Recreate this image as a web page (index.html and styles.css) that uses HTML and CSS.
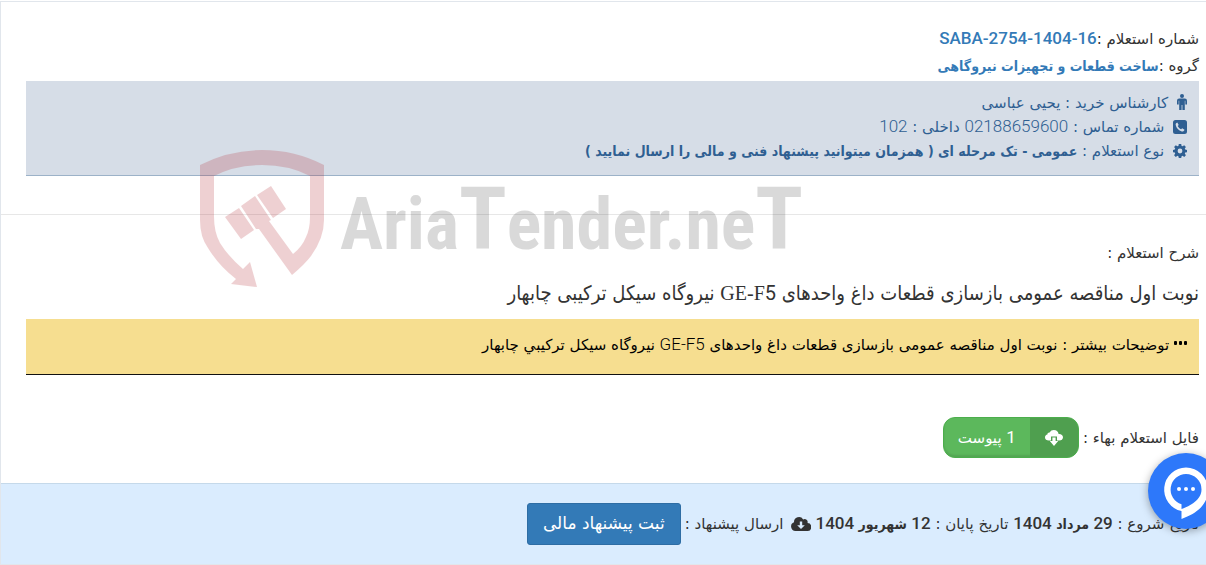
FILE: index.html
```html
<!DOCTYPE html>
<html lang="fa" dir="rtl">
<head>
    <meta charset="UTF-8">
    <meta name="viewport" content="width=device-width, initial-scale=1.0">
    <title>شرح استعلام</title>
    <link rel="stylesheet" href="styles.css">
</head>
<body>
    <main class="inquiry">
        <section class="inquiry-head">
            <div class="head-row">شماره استعلام :<a href="#" class="head-link num">SABA-2754-1404-16</a></div>
            <div class="head-row">گروه :<a href="#" class="head-link">ساخت قطعات و تجهیزات نیروگاهی</a></div>
            <div class="contact-box">
                <div class="contact-row">
                    <svg class="icon icon-male" viewBox="0 0 10 16"><circle cx="5" cy="2" r="2"/><path d="M2.2 4.6h5.6Q10 4.6 10 6.8V10.500h-1.700V6.800h-.5V16H5.400v-5h-.8v5H2.200V6.800h-.5v3.700H0V6.800Q0 4.600 2.200 4.600z"/></svg>
                    کارشناس خرید : یحیی عباسی
                </div>
                <div class="contact-row">
                    <svg class="icon" viewBox="0 0 14 14"><path fill-rule="evenodd" d="M2.500 0h9A2.500 2.500 0 0 1 14 2.500v9a2.500 2.500 0 0 1-2.500 2.500h-9A2.500 2.500 0 0 1 0 11.500v-9A2.500 2.500 0 0 1 2.500 0zM4.300 2.500C3 3 2.500 3.900 2.700 5.100c.6 3 3 5.600 6.100 6.300 1.300.2 2.300-.4 2.700-1.700l-2.300-1.400-1.100 1C6.600 8.700 5.500 7.500 4.700 6l1-1.100z"/></svg>
                    شماره تماس : <span class="num">02188659600</span> داخلی : <span class="num">102</span>
                </div>
                <div class="contact-row">
                    <svg class="icon" viewBox="0 0 14 14"><path fill-rule="evenodd" d="M5.800 0h2.400l.4 1.900 1 .4 1.600-1.100 1.700 1.700-1.100 1.600.4 1 1.800.4v2.300l-1.800.4-.4 1 1.100 1.600-1.700 1.700-1.600-1.100-1 .4L8.200 14H5.800l-.4-1.800-1-.4-1.600 1.100-1.700-1.700 1.100-1.600-.4-1L0 8.200V5.900l1.800-.4.4-1-1.100-1.600 1.700-1.700 1.600 1.100 1-.4zM7 4.600a2.400 2.400 0 1 0 0 4.800 2.400 2.400 0 0 0 0-4.800z"/></svg>
                    نوع استعلام : <b>عمومی - تک مرحله ای ( همزمان میتوانید پیشنهاد فنی و مالی را ارسال نمایید )</b>
                </div>
            </div>
        </section>

        <section class="inquiry-body">
            <div class="body-label">شرح استعلام :</div>
            <h1 class="body-title">نوبت اول مناقصه عمومی بازسازی قطعات داغ واحدهای <span class="serif">GE-F</span><span class="num">5</span> نیروگاه سیکل ترکیبی چابهار</h1>
            <div class="note-box">
                <svg class="icon-dots" viewBox="0 0 13 4"><rect width="3" height="4" rx="1"/><rect x="5" width="3" height="4" rx="1"/><rect x="10" width="3" height="4" rx="1"/></svg>
                توضیحات بیشتر : نوبت اول مناقصه عمومی بازسازی قطعات داغ واحدهای <span class="num">GE-F5</span> نیروگاه سیکل ترکیبي چابهار
            </div>
            <div class="file-row">
                <span>فایل استعلام بهاء :</span>
                <button type="button" class="file-button">
                    <span class="file-icon">
                        <svg class="icon-cloud" viewBox="0 0 18 16"><path d="M4 10.500C1.500 10.500 0 9.200 0 7.400 0 5.800 1 4.800 2.400 4.500 2.300 3.200 3.300 2.400 4.600 2.500 5.600.8 7 0 8.800 0c2.600 0 4.400 1.600 4.800 4 2.500-.2 4.400 1.100 4.400 3.200 0 2-1.500 3.300-3.800 3.300h-2.200v-4H6v4z"/><path d="M7.400 7.500h3.200v3.500h2.600L9 16l-4.200-5h2.600z"/></svg>
                    </span>
                    <span class="file-text"><span class="num">1</span> پیوست</span>
                </button>
            </div>
        </section>

        <footer class="inquiry-footer">
            <span>تاریخ شروع : <b><span class="num">29</span> مرداد <span class="num">1404</span></b> تاریخ پایان : <b><span class="num">12</span> شهریور <span class="num">1404</span></b></span>
            <svg class="icon-cloud-dark" viewBox="0 0 20 14"><path fill-rule="evenodd" d="M4.500 14A4.500 4.500 0 0 1 3 5.300 5 5 0 0 1 12.200 2.400 3 3 0 0 1 16.500 6 4 4 0 0 1 16 14zM8.800 4.500v3.700H6.200L10 12l3.800-3.800h-2.600V4.500z"/></svg>
            <span>ارسال پیشنهاد :</span>
            <button type="button" class="submit-button">ثبت پیشنهاد مالی</button>
        </footer>

        <div class="watermark" dir="ltr">
            <svg class="watermark-shield" viewBox="0 0 124 137">
                <path d="M62 0Q95 0 124 15V70Q124 88 111 106 105 114 92 125L59 79 56 79 41 56 55 46 71 70 69 71 93 104Q102 97 106 87 110 79 110 67V26Q89 15 62 15T14 26V67Q14 82 20 93 28 106 43 119L50 112 57 137 31 134 36 129Q19 116 8 98 0 87 0 70V15Q29 0 62 0z"/>
                <path d="M25 67L39 58 54 80 41 89zM57 45L71 36 86 59 73 68z"/>
            </svg>
            <span class="watermark-text">Aria<span class="watermark-cap">T</span>ender.ne<span class="watermark-cap">T</span></span>
        </div>
    </main>

    <button type="button" class="chat-button" aria-label="گفتگو">
        <svg class="chat-icon" viewBox="0 0 76 76"><path fill-rule="evenodd" d="M38 14.500a22 22 0 0 1 22 22C60 51 50 60 33.500 66V58A22 22 0 0 1 38 14.500zm0 6.500a15.500 15.500 0 0 0-4.500 30.300V56C42 53 53.500 47 53.500 36.500a15.500 15.500 0 0 0-15.500-15.500z"/><circle cx="31" cy="36" r="2"/><circle cx="38" cy="36" r="2"/><circle cx="45" cy="36" r="2"/></svg>
    </button>
</body>
</html>
```
FILE: styles.css
```css
* {
    box-sizing: border-box;
}
body {
    margin: 0;
    font-family: "DejaVu Sans", sans-serif;
    font-size: 15px;
    color: #333;
    background: #fff;
}
a {
    color: #337ab7;
    text-decoration: none;
}
button {
    font-family: inherit;
    cursor: pointer;
}
b {
    font-family: "DejaVu Sans Condensed", "DejaVu Sans", sans-serif;
    font-size: 14px;
}
.num {
    font-family: Roboto, sans-serif;
    font-size: 17px;
    font-weight: 300;
    line-height: 1;
}
b .num {
    font-weight: 500;
}
.inquiry {
    position: relative;
    margin-top: 1px;
    border: 1px solid #e1e6ec;
    border-right: 0;
}
.inquiry-head {
    padding: 24px 7px 38px 25px;
    border-bottom: 1px solid #e7e7e7;
}
.head-row {
    line-height: 27px;
    height: 27px;
}
.head-link {
    font-family: "DejaVu Sans Condensed", "DejaVu Sans", sans-serif;
    font-size: 14px;
    font-weight: bold;
}
.head-link.num {
    font-family: Roboto, sans-serif;
    font-size: 17px;
    font-weight: 500;
}
.contact-box {
    padding: 10px 12px 12px;
    background: #d6dde7;
    border-bottom: 1px solid #9cb2c8;
    color: #2f5f92;
    margin-top: 1px;
}
.contact-row {
    height: 24px;
    line-height: 24px;
}
.icon {
    width: 14px;
    height: 14px;
    fill: #2f5f92;
    margin-left: 4px;
    vertical-align: -2px;
}
.icon-male {
    width: 10px;
    height: 16px;
}
.inquiry-body {
    padding: 26px 7px 25px 25px;
}
.body-label {
    line-height: 24px;
    height: 24px;
}
.body-title {
    margin: 0;
    font-family: "DejaVu Sans Condensed", "DejaVu Sans", sans-serif;
    font-size: 20px;
    font-weight: normal;
    line-height: 56px;
    height: 54px;
}
.body-title .num {
    font-size: 20px;
    font-weight: 400;
}
.serif {
    font-family: "Liberation Serif", serif;
    font-size: 20px;
    line-height: 1;
}
.note-box {
    padding: 14px 12px 17px;
    background: #f6de90;
    border-bottom: 1px solid #111;
    color: #000;
    line-height: 24px;
}
.icon-dots {
    width: 13px;
    height: 4px;
    vertical-align: 5px;
}
.file-row {
    display: flex;
    align-items: center;
    gap: 4px;
    margin-top: 42px;
}
.file-button {
    display: flex;
    height: 41px;
    padding: 0;
    overflow: hidden;
    border: 1px solid #4cae4c;
    border-radius: 12px;
    background: #5cb85c;
    box-shadow: inset 0 -2px 2px rgba(0, 0, 0, 0.1);
    color: #fff;
    font-size: 15px;
}
.file-icon {
    display: flex;
    align-items: center;
    justify-content: center;
    width: 48px;
    background: #4f9f4f;
}
.file-text {
    padding: 0 14px;
    align-self: center;
}
.file-text .num {
    font-weight: 400;
}
.icon-cloud {
    width: 18px;
    height: 16px;
    fill: #fff;
}
.inquiry-footer {
    display: flex;
    align-items: center;
    gap: 4px;
    padding: 19px 7px;
    background: #daecfe;
    border-top: 1px solid #c5d9ea;
}
.icon-cloud-dark {
    width: 20px;
    height: 14px;
    margin-left: 4px;
    fill: #333;
}
.submit-button {
    height: 42px;
    padding: 0 15px 2px;
    border: 1px solid #2e6da4;
    border-radius: 3px;
    background: #337ab7;
    color: #fff;
    font-size: 17px;
}
/* Logo laid over the page */
.watermark {
    position: absolute;
    top: 148px;
    left: 199px;
    display: flex;
    align-items: center;
    gap: 16px;
    opacity: 0.2;
    pointer-events: none;
}
.watermark-shield {
    width: 124px;
    height: 137px;
    fill: #b01c24;
}
.watermark-text {
    font-family: "Roboto Condensed", Roboto, sans-serif;
    font-size: 72px;
    font-weight: bold;
    color: #444;
}
.watermark-cap {
    font-size: 88px;
}
/* Support chat */
.chat-button {
    position: fixed;
    right: -18px;
    top: 453px;
    width: 76px;
    height: 76px;
    padding: 0;
    border: 0;
    border-radius: 50%;
    background: #2d78fa;
    box-shadow: 0 2px 8px rgba(0, 0, 0, 0.35);
}
.chat-icon {
    display: block;
    fill: #fff;
}
```
